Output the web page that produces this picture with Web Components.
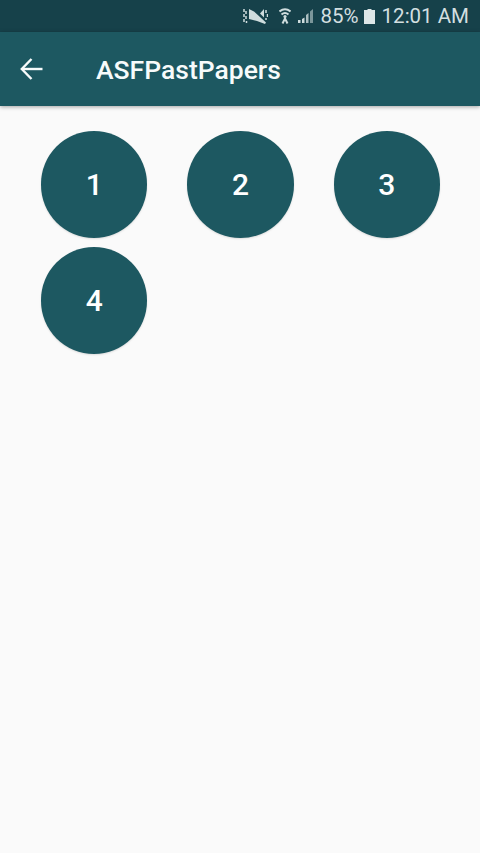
<!DOCTYPE html>
<html>
<head>
<meta charset="utf-8">
<title>ASFPastPapers</title>
<style>
    html, body { margin: 0; padding: 0; height: 100%; background: #fafafa; }
    body { font-family: Roboto, "Liberation Sans", sans-serif; overflow: hidden; }
</style>
</head>
<body>
<paper-app>
    <status-bar slot="status"></status-bar>
    <app-bar slot="bar" title="ASFPastPapers"></app-bar>
    <paper-grid>
        <year-circle>1</year-circle>
        <year-circle>2</year-circle>
        <year-circle>3</year-circle>
        <year-circle>4</year-circle>
    </paper-grid>
</paper-app>
<script>
const appTemplate = document.createElement('template');
appTemplate.innerHTML = `
    <style>
        :host { display: flex; flex-direction: column; width: 480px; height: 853px; }
    </style>
    <slot name="status"></slot>
    <slot name="bar"></slot>
    <slot></slot>
`;

class PaperApp extends HTMLElement {
    constructor() {
        super();
        this.attachShadow({ mode: 'open' });
        this.shadowRoot.appendChild(appTemplate.content.cloneNode(true));
    }
}

const statusTemplate = document.createElement('template');
statusTemplate.innerHTML = `
    <style>
        :host {
            display: flex;
            align-items: center;
            justify-content: flex-end;
            height: 32px;
            padding-right: 11px;
            box-sizing: border-box;
            background: #16414a;
            color: #d3dfe0;
            font: 20.5px Roboto, "Liberation Sans", sans-serif;
        }
        svg { display: block; flex: none; }
        .mute { margin-right: 11px; }
        .wifi { margin-right: 6px; }
        .signal { margin-right: 7px; }
        .battery { margin: 0 7px 0 5px; }
    </style>
    <svg class="mute" width="25" height="16" viewBox="0 0 25 16" fill="#cfdcdd">
        <path d="M6 1 L11 3.500 L23 14.500 L22 16 L14 13 L6 11 Z"/>
        <path d="M17 5.500 L21 1 V9.500 Z"/>
        <path d="M1 1 v3 M3 3 v3 M1 6 v3 M3 8 v3 M1 11 v3 M3.500 13 v2 M23 2 v3 M24.500 6 v3 M23 10 v2" stroke="#cfdcdd" stroke-width="1.500" fill="none"/>
    </svg>
    <svg class="wifi" width="12" height="16" viewBox="0 0 12 16" fill="none" stroke="#cfdcdd">
        <path d="M0.500 3.500 Q6 -1 11.500 3.500" stroke-width="2"/>
        <path d="M2.500 6.500 Q6 3.500 9.500 6.500" stroke-width="2"/>
        <circle cx="6" cy="8.500" r="1.600" fill="#cfdcdd" stroke="none"/>
        <path d="M3.500 15.500 L6 10.500 L8.500 15.500" stroke-width="2"/>
    </svg>
    <svg class="signal" width="17" height="16" viewBox="0 0 17 16" fill="#cfdcdd">
        <rect x="1" y="12" width="2.500" height="3"/>
        <path d="M5 11 L7.500 9.500 V15 H5 Z"/>
        <path d="M9 7 L11.500 5 V15 H9 Z" opacity=".8"/>
        <path d="M13 3.500 L16 1 V15 H13 Z" opacity=".55"/>
    </svg>
    <span>85%</span>
    <svg class="battery" width="11" height="15" viewBox="0 0 11 15" fill="#dde6e7">
        <path d="M3.500 0 H7.500 V1 H11 V15 H0 V1 H3.500 Z"/>
    </svg>
    <span class="time">12:01 AM</span>
`;

class StatusBar extends HTMLElement {
    constructor() {
        super();
        this.attachShadow({ mode: 'open' });
        this.shadowRoot.appendChild(statusTemplate.content.cloneNode(true));
    }
}

const barTemplate = document.createElement('template');
barTemplate.innerHTML = `
    <style>
        :host {
            display: flex;
            align-items: center;
            height: 74px;
            padding-left: 20px;
            box-sizing: border-box;
            background: #1d5861;
            color: #f7fbfb;
            box-shadow: 0 1px 4px rgba(0, 0, 0, 0.35);
            position: relative;
            font: 500 26.5px Roboto, "Liberation Sans", sans-serif;
        }
        svg { display: block; flex: none; margin-right: 53px; }
    </style>
    <svg width="23" height="22" viewBox="0 0 23 22" fill="none" stroke="#f7fbfb" stroke-width="2.400">
        <path d="M22.500 11 H2"/>
        <path d="M11.500 1 L1.800 11 L11.500 21"/>
    </svg>
    <span class="title"></span>
`;

class AppBar extends HTMLElement {
    constructor() {
        super();
        this.attachShadow({ mode: 'open' });
        this.shadowRoot.appendChild(barTemplate.content.cloneNode(true));
    }

    connectedCallback() {
        this.shadowRoot.querySelector('.title').textContent = this.getAttribute('title');
    }
}

const gridTemplate = document.createElement('template');
gridTemplate.innerHTML = `
    <style>
        :host {
            display: grid;
            grid-template-columns: repeat(3, 146.33px);
            row-gap: 9.500px;
            justify-items: center;
            padding: 25px 0 0 21px;
        }
    </style>
    <slot></slot>
`;

class PaperGrid extends HTMLElement {
    constructor() {
        super();
        this.attachShadow({ mode: 'open' });
        this.shadowRoot.appendChild(gridTemplate.content.cloneNode(true));
    }
}

const circleTemplate = document.createElement('template');
circleTemplate.innerHTML = `
    <style>
        :host {
            display: flex;
            align-items: center;
            justify-content: center;
            width: 106.500px;
            height: 106.500px;
            border-radius: 50%;
            background: #1d5861;
            color: #fff;
            box-shadow: 0 1px 2px rgba(0, 0, 0, 0.12);
            font: 500 30px Roboto, "Liberation Sans", sans-serif;
        }
    </style>
    <slot></slot>
`;

class YearCircle extends HTMLElement {
    constructor() {
        super();
        this.attachShadow({ mode: 'open' });
        this.shadowRoot.appendChild(circleTemplate.content.cloneNode(true));
    }
}

customElements.define('paper-app', PaperApp);
customElements.define('status-bar', StatusBar);
customElements.define('app-bar', AppBar);
customElements.define('paper-grid', PaperGrid);
customElements.define('year-circle', YearCircle);
</script>
</body>
</html>
